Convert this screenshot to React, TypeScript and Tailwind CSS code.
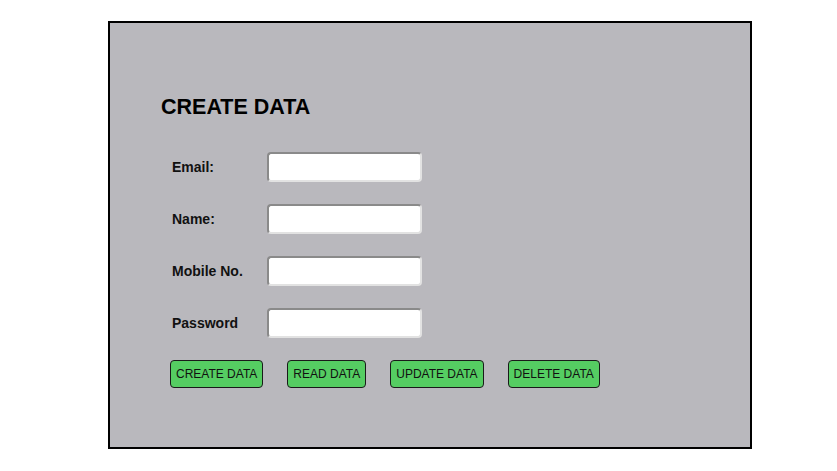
export default function App() {
  const fields = ["Email:", "Name:", "Mobile No.", "Password"];
  const buttons = ["CREATE DATA", "READ DATA", "UPDATE DATA", "DELETE DATA"];

  return (
    <div className="w-[837px] h-[471px] bg-white pt-[21px] pl-[108px] font-['Liberation_Sans',Arial,sans-serif]">
      <div className="w-[644px] h-[428px] border-2 border-black bg-[#b9b8bd] pt-[72px] pl-[51px]">
        <h1 className="text-[21.5px] leading-[24px] font-bold text-black">CREATE DATA</h1>

        {/* form rows */}
        <div className="mt-[33px] pl-[11px] flex flex-col gap-[22px]">
          {fields.map((f) => (
            <div key={f} className="flex items-center h-[30px]">
              <label className="w-[95px] text-[14px] font-bold text-[#111]">{f}</label>
              <input
                type="text"
                className="w-[155px] h-[30px] bg-white rounded-[4px] border-2 border-t-[#8a8a8a] border-l-[#8a8a8a] border-b-[#e2e2e2] border-r-[#e2e2e2] outline-none"
              />
            </div>
          ))}
        </div>

        {/* action buttons */}
        <div className="mt-[22px] pl-[9px] flex gap-[24px]">
          {buttons.map((b) => (
            <button
              key={b}
              className="h-[28px] px-[5px] bg-[#55cd62] border border-[#1a1a1a] rounded-[4px] text-[12px] text-[#111]"
            >
              {b}
            </button>
          ))}
        </div>
      </div>
    </div>
  );
}
